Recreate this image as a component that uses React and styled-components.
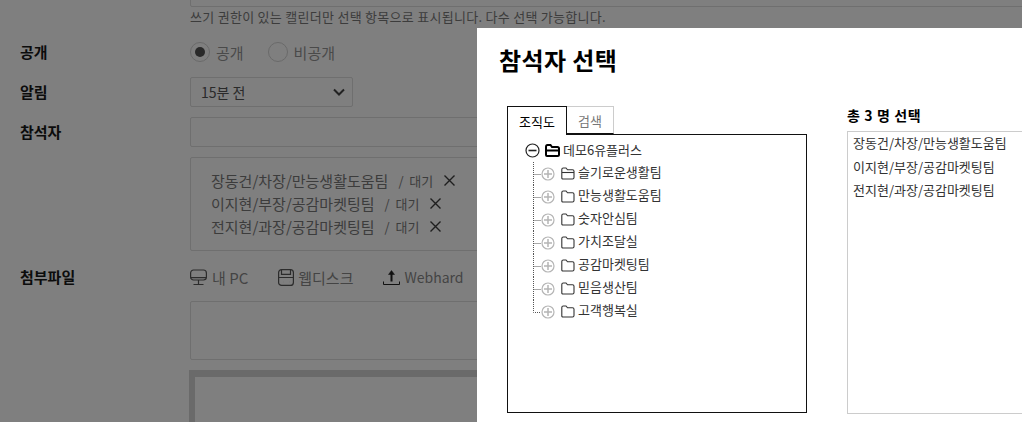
import React from "react";
import styled, { createGlobalStyle } from "styled-components";

const Global = createGlobalStyle`
  html, body { margin: 0; padding: 0; overflow: hidden; background: #7f7f7f; }
  * { box-sizing: border-box; }
  body { font-family: "Noto Sans CJK KR", "Noto Sans", sans-serif; }
`;

const Page = styled.div`
  position: relative;
  width: 1022px;
  height: 422px;
  overflow: hidden;
  background: #7f7f7f;
`;

const Form = styled.div`
  display: flex;
  flex-direction: column;
  padding-left: 20px;
  margin-top: -14px;
`;

const Row = styled.div`
  display: grid;
  grid-template-columns: 170px 900px;
  align-items: center;
  margin-top: ${p => p.$mt || 0}px;
`;

const Label = styled.div`
  font-size: 15px;
  font-weight: 700;
  color: #0c0c0c;
  line-height: 20px;
`;

const Field = styled.div`
  height: ${p => p.$h}px;
  width: 900px;
  border: 1px solid #6f6f6f;
  border-radius: 2px;
  margin-top: ${p => p.$mt || 0}px;
`;

const Hint = styled.div`
  font-size: 13px;
  line-height: 18px;
  color: #3c3c3c;
  letter-spacing: 0.28px;
  margin-top: 1px;
  white-space: nowrap;
`;

const Radios = styled.div`
  display: flex;
  align-items: center;
  height: 20px;
  color: #4a4a4a;
  font-size: 15px;
`;

const Radio = styled.span`
  width: 20px;
  height: 20px;
  border: 1px solid #6a6a6a;
  border-radius: 50%;
  margin-right: 6px;
  display: flex;
  align-items: center;
  justify-content: center;
  &::after {
    content: "";
    width: 10px;
    height: 10px;
    border-radius: 50%;
    background: ${p => p.$on ? "#2a2a2a" : "transparent"};
  }
`;

const RadioText = styled.span`
  margin-right: 24px;
`;

const Select = styled.div`
  width: 163px;
  height: 30px;
  border: 1px solid #6f6f6f;
  border-radius: 2px;
  padding: 0 7px 0 10px;
  display: flex;
  align-items: center;
  justify-content: space-between;
  font-size: 14px;
  color: #2a2a2a;
`;

const AttendeeBox = styled.div`
  width: 900px;
  height: 94px;
  border: 1px solid #6f6f6f;
  border-radius: 2px;
  margin-top: 10px;
  padding: 11px 20px;
  display: flex;
  flex-direction: column;
`;

const Attendee = styled.div`
  display: flex;
  align-items: center;
  height: 23px;
  font-size: 15px;
  color: #3c3c3c;
`;

const State = styled.span`
  font-size: 13px;
  margin: 0 11px 0 10px;
  color: #3c3c3c;
`;

const Files = styled.div`
  display: flex;
  align-items: center;
  height: 20px;
  font-size: 15px;
  color: #444;
`;

const FileBtn = styled.span`
  display: flex;
  align-items: center;
  gap: ${p => p.$gap || 4}px;
  margin-right: 30px;
  font-size: ${p => p.$size || 15}px;
`;

const Editor = styled.div`
  width: 900px;
  height: 120px;
  margin: 10px 0 0 -1px;
  border: 0 solid #6a6a6a;
  border-width: 7px 0 0 6px;
`;

const Modal = styled.div`
  position: absolute;
  left: 477px;
  top: 28px;
  right: 0;
  bottom: 0;
  background: #fff;
  padding: 16px 0 0 22px;
  overflow: hidden;
`;

const Title = styled.h2`
  margin: 0;
  font-size: 24px;
  line-height: 32px;
  font-weight: 700;
  color: #000;
  letter-spacing: 0.4px;
`;

const Columns = styled.div`
  display: flex;
  margin: 30px 0 0 8px;
`;

const LeftCol = styled.div`
  width: 300px;
  flex: none;
`;

const Tabs = styled.div`
  display: flex;
  height: 29px;
  margin-bottom: -1px;
  position: relative;
`;

const Tab = styled.div`
  width: ${p => p.$w}px;
  height: ${p => p.$active ? 29 : 28}px;
  display: flex;
  align-items: center;
  justify-content: center;
  font-size: 13px;
  background: #fff;
  color: ${p => p.$active ? "#000" : "#777"};
  border: 1px solid ${p => p.$active ? "#111" : "#ccc"};
  border-bottom: ${p => p.$active ? "none" : "1px solid #111"};
  border-left: ${p => p.$active ? "" : "none"};
`;

const Tree = styled.div`
  height: 279px;
  border: 1px solid #111;
  padding: 4px 0 0 17px;
`;

const TreeRow = styled.div`
  display: flex;
  align-items: center;
  height: 23px;
  font-size: 13px;
  color: #333;
`;

const Name = styled.span`
  margin-left: 3px;
  position: relative;
  top: ${p => p.$lift || -1}px;
`;

const RightCol = styled.div`
  margin-left: 40px;
  width: 300px;
  flex: none;
`;

const Total = styled.div`
  font-size: 14px;
  font-weight: 700;
  color: #000;
  line-height: 18px;
  margin-bottom: 7px;
  letter-spacing: 0.6px;
`;

const Selected = styled.div`
  height: 283px;
  border: 1px solid #ccc;
  padding: 0 5px;
  font-size: 13px;
  color: #333;
`;

const SelectedItem = styled.div`
  height: 23.5px;
  line-height: 22px;
`;

const X = () => (
  <svg width="11" height="11" viewBox="0 0 11 11" fill="none" stroke="#1f1f1f" strokeWidth="1.4">
    <path d="M.5.5l10 10M10.5.5l-10 10" />
  </svg>
);

const Chevron = () => (
  <svg width="12" height="8" viewBox="0 0 12 8" fill="none" stroke="#222" strokeWidth="2">
    <path d="M1 1.5l5 5 5-5" />
  </svg>
);

const Monitor = () => (
  <svg width="17" height="17" viewBox="0 0 17 17" fill="none" stroke="#2c2c2c" strokeWidth="1.2">
    <rect x=".6" y="1" width="15.8" height="10" rx="3" />
    <path d="M.8 8.600h15.400M8.500 11v4M3.500 15.500h10" />
  </svg>
);

const Disk = () => (
  <svg width="16" height="17" viewBox="0 0 16 17" fill="none" stroke="#2c2c2c" strokeWidth="1.2">
    <rect x=".6" y=".6" width="14.8" height="15.8" rx="3" />
    <path d="M3.500.8v4.500h9V.8M1 8.500h14M5 13h.1M11 13h.1" />
  </svg>
);

const Upload = () => (
  <svg width="17" height="17" viewBox="0 0 17 17" fill="none" stroke="#111">
    <path d="M.5 12.500v3h16v-3" strokeWidth="1" />
    <path d="M8.500 12.500V5" strokeWidth="2" />
    <path d="M5.500 5.500l3-4 3 4z" fill="#111" strokeWidth=".5" />
  </svg>
);

const Minus = () => (
  <svg width="15" height="15" viewBox="0 0 15 15" fill="none" stroke="#222" strokeWidth="1.2">
    <circle cx="7.5" cy="7.5" r="6.5" />
    <path d="M3.500 7.500h8" strokeWidth="1.6" />
  </svg>
);

const Plus = () => (
  <svg width="14" height="14" viewBox="0 0 14 14" fill="none" stroke="#b5b5b5" strokeWidth="1.2">
    <circle cx="7" cy="7" r="6" />
    <path d="M3 7h8M7 3v8" strokeWidth="1.5" />
  </svg>
);

const FolderRoot = () => (
  <svg width="15" height="13" viewBox="0 0 15 13" fill="none" stroke="#000" strokeWidth="2" style={{ marginLeft: 5 }}>
    <path d="M1 11V3c0-1 .5-2 1.500-2h3l1.500 2h5.500c1 0 1.500.5 1.500 1.500V10.500c0 1-.5 1.500-1.500 1.500H2c-.6 0-1-.4-1-1z" />
    <path d="M1 6.500h13" />
  </svg>
);

const Folder = ({ open }) => (
  <svg width="14" height="13" viewBox="0 0 14 13" fill="none" stroke="#333" strokeWidth="1.1" style={{ marginLeft: 6 }}>
    <path d="M.8 11V2.500C.8 1.500 1.300 1 2.300 1h2.700l1.500 1.800h5c1 0 1.500.5 1.500 1.500V10.500c0 1-.5 1.500-1.500 1.500H2c-.7 0-1.200-.4-1.200-1z" />
    {open && <path d="M1 5.500h12" />}
  </svg>
);

const Connector = ({ last }) => (
  <svg width="8" height="23" viewBox="0 0 8 23" fill="none" stroke="#555" strokeDasharray="1 1" style={{ marginLeft: 8, flex: "none" }}>
    <path d={last ? "M.5 0v12.500H8" : "M.5 0v23M.5 12.500H8"} />
  </svg>
);

const teams = ["슬기로운생활팀", "만능생활도움팀", "숫자안심팀", "가치조달실", "공감마켓팅팀", "믿음생산팀", "고객행복실"];
const people = [
  "장동건/차장/만능생활도움팀",
  "이지현/부장/공감마켓팅팀",
  "전지현/과장/공감마켓팅팀",
];

export default function App() {
  return (
    <Page>
      <Global />
      <Form>
        <Row>
          <span />
          <Field $h={21} />
        </Row>
        <Row>
          <span />
          <Hint>쓰기 권한이 있는 캘린더만 선택 항목으로 표시됩니다. 다수 선택 가능합니다.</Hint>
        </Row>
        <Row $mt={16}>
          <Label>공개</Label>
          <Radios>
            <Radio $on />
            <RadioText>공개</RadioText>
            <Radio />
            <RadioText>비공개</RadioText>
          </Radios>
        </Row>
        <Row $mt={15}>
          <Label>알림</Label>
          <Select>
            15분 전
            <Chevron />
          </Select>
        </Row>
        <Row $mt={10}>
          <Label>참석자</Label>
          <Field $h={30} />
        </Row>
        <Row>
          <span />
          <AttendeeBox>
            {people.map(p => (
              <Attendee key={p}>
                {p}
                <State>/&nbsp; 대기</State>
                <X />
              </Attendee>
            ))}
          </AttendeeBox>
        </Row>
        <Row $mt={16}>
          <Label>첨부파일</Label>
          <Files>
            <FileBtn $gap={5}>
              <Monitor />
              내 PC
            </FileBtn>
            <FileBtn>
              <Disk />
              웹디스크
            </FileBtn>
            <FileBtn $size={14}>
              <Upload />
              Webhard
            </FileBtn>
          </Files>
        </Row>
        <Row>
          <span />
          <Field $h={59} $mt={14} />
        </Row>
        <Row>
          <span />
          <Editor />
        </Row>
      </Form>
      <Modal>
        <Title>참석자 선택</Title>
        <Columns>
          <LeftCol>
            <Tabs>
              <Tab $w={60} $active>조직도</Tab>
              <Tab $w={47}>검색</Tab>
            </Tabs>
            <Tree>
              <TreeRow>
                <Minus />
                <FolderRoot />
                <Name>데모6유플러스</Name>
              </TreeRow>
              {teams.map((t, i) => (
                <TreeRow key={t}>
                  <Connector last={i === teams.length - 1} />
                  <Plus />
                  <Folder open={i === 0} />
                  <Name $lift={-2}>{t}</Name>
                </TreeRow>
              ))}
            </Tree>
          </LeftCol>
          <RightCol>
            <Total>총 3 명 선택</Total>
            <Selected>
              {people.map(p => <SelectedItem key={p}>{p}</SelectedItem>)}
            </Selected>
          </RightCol>
        </Columns>
      </Modal>
    </Page>
  );
}
